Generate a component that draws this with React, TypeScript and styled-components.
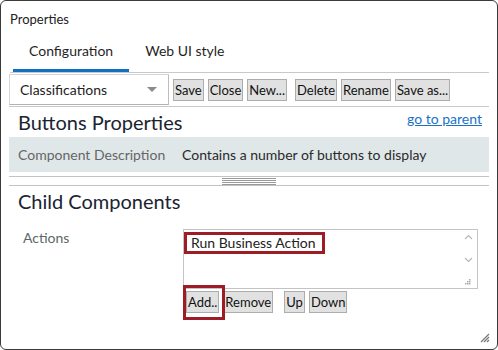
import styled, { createGlobalStyle } from "styled-components";

const GlobalStyle = createGlobalStyle`
  body {
    margin: 0;
    background: #fff;
    font-family: "Segoe UI", Lato, "Liberation Sans", sans-serif;
  }
`;

const Window = styled.div`
  position: relative;
  width: 498px;
  height: 350px;
  box-sizing: border-box;
  border: 1px solid #3a3a3a;
  border-radius: 6px;
  background: #fff;
  padding: 0 8px 0 7px;
  display: flex;
  flex-direction: column;
  color: #1f1f1f;
`;

const Title = styled.div`
  font-size: 13px;
  line-height: 16px;
  padding: 10px 0 0 2px;
  color: #222;
`;

const TabStrip = styled.div`
  display: flex;
  margin: 2px 0 0 2px;
  padding-left: 3px;
  border-bottom: 1px solid #c9c9c9;
`;

const Tab = styled.div<{ $active?: boolean }>`
  height: 43px;
  box-sizing: border-box;
  display: flex;
  align-items: center;
  padding: 2px 16px 0;
  font-size: 14px;
  color: #1f1f1f;
  border-bottom: 3px solid ${(p) => (p.$active ? "#1070c4" : "transparent")};
`;

const Toolbar = styled.div`
  display: flex;
  align-items: center;
  gap: 4px;
  height: 31px;
  margin: 1px 0 0 1px;
  padding-bottom: 1px;
  border-bottom: 1px solid #c9c9c9;
`;

const Select = styled.div`
  width: 160px;
  height: 31px;
  box-sizing: border-box;
  display: flex;
  align-items: center;
  justify-content: space-between;
  padding: 0 11px 0 10px;
  border: 1px solid #d6d6d6;
  border-right-color: #bdbdbd;
  border-bottom-color: #b3b3b3;
  font-size: 14px;
  color: #222;
`;

const Caret = styled.span`
  width: 0;
  height: 0;
  border-left: 5px solid transparent;
  border-right: 5px solid transparent;
  border-top: 5px solid #8a8a8a;
`;

const Btn = styled.button<{ $gap?: number }>`
  height: 22px;
  box-sizing: border-box;
  padding: 0 1px;
  margin-left: ${(p) => p.$gap ?? 0}px;
  background: #e1e1e1;
  border: 1px solid #adadad;
  border-radius: 0;
  font-family: inherit;
  font-size: 13px;
  color: #111;
  line-height: 18px;
`;

const HeaderRow = styled.div`
  display: flex;
  justify-content: space-between;
  align-items: flex-start;
  height: 30px;
  padding: 0 7px 0 10px;
`;

const Heading = styled.div`
  font-size: 20px;
  line-height: 28px;
  margin-top: 1px;
  color: #1a2430;
`;

const Link = styled.a`
  font-size: 14px;
  line-height: 18px;
  margin-top: 3px;
  color: #1a72c8;
  text-decoration: underline;
`;

const DescRow = styled.div`
  display: flex;
  align-items: center;
  height: 35px;
  margin-left: 1px;
  padding-left: 9px;
  background: #dfe7e9;
  font-size: 14px;
`;

const DescLabel = styled.span`
  width: 164px;
  color: #666;
`;

const DescValue = styled.span`
  color: #2a2a2a;
`;

const Splitter = styled.div`
  display: flex;
  justify-content: center;
  align-items: center;
  height: 8px;
  margin: 4px 0 0 1px;
  border-top: 1px solid #c3c3c3;
  border-bottom: 1px solid #c3c3c3;
`;

const Grip = styled.div`
  width: 54px;
  height: 7px;
  background: repeating-linear-gradient(
    to bottom,
    #9a9a9a 0 1px,
    transparent 1px 2px
  );
`;

const FormRow = styled.div`
  display: flex;
  margin-top: 13px;
`;

const FieldLabel = styled.div`
  width: 160px;
  padding-left: 15px;
  font-size: 14px;
  line-height: 18px;
  color: #5c6868;
`;

const FieldBody = styled.div`
  display: flex;
  flex-direction: column;
`;

const ListBox = styled.div`
  position: relative;
  width: 295px;
  height: 60px;
  box-sizing: border-box;
  border: 1px solid #c4c4c4;
  padding: 2px 0 0 0;
`;

const Marked = styled.span`
  display: inline-block;
  border: 3px solid #9d1c26;
  padding: 0 6px 0 4px;
  font-size: 14px;
  line-height: 16px;
  color: #222;
`;

const ScrollArrows = styled.div`
  position: absolute;
  right: 4px;
  top: 4px;
  bottom: 3px;
  width: 10px;
  display: flex;
  flex-direction: column;
  justify-content: space-between;
  align-items: center;
`;

const ButtonRow = styled.div`
  display: flex;
  align-items: center;
  gap: 4px;
  margin: 2px 0 0 3px;
`;

const Outline = styled.span`
  position: relative;
  display: inline-flex;
  &::after {
    content: "";
    position: absolute;
    left: -3px;
    right: -6px;
    top: -6px;
    bottom: -7px;
    border: 3px solid #9d1c26;
    pointer-events: none;
  }
`;

const ResizeGrip = styled.svg`
  position: absolute;
  right: 7px;
  bottom: 6px;
`;

function Chevron({ up }: { up?: boolean }) {
  return (
    <svg width="9" height="6" viewBox="0 0 9 6">
      <path
        d={up ? "M1 5 L4.5 1.5 L8 5" : "M1 1 L4.5 4.5 L8 1"}
        fill="none"
        stroke="#b8b8b8"
        strokeWidth="1.2"
      />
    </svg>
  );
}

export default function App() {
  return (
    <>
      <GlobalStyle />
      <Window>
        <Title>Properties</Title>
        <TabStrip>
          <Tab $active>Configuration</Tab>
          <Tab>Web UI style</Tab>
        </TabStrip>
        <Toolbar>
          <Select>
            Classifications
            <Caret />
          </Select>
          <Btn>Save</Btn>
          <Btn>Close</Btn>
          <Btn>New...</Btn>
          <Btn $gap={4}>Delete</Btn>
          <Btn>Rename</Btn>
          <Btn>Save as...</Btn>
        </Toolbar>
        <HeaderRow>
          <Heading>Buttons Properties</Heading>
          <Link href="#">go to parent</Link>
        </HeaderRow>
        <DescRow>
          <DescLabel>Component Description</DescLabel>
          <DescValue>Contains a number of buttons to display</DescValue>
        </DescRow>
        <Splitter>
          <Grip />
        </Splitter>
        <HeaderRow>
          <Heading>Child Components</Heading>
        </HeaderRow>
        <FormRow>
          <FieldLabel>Actions</FieldLabel>
          <FieldBody>
            <ListBox>
              <Marked>Run Business Action</Marked>
              <ScrollArrows>
                <Chevron up />
                <Chevron />
                <svg width="6" height="6" viewBox="0 0 6 6">
                  <rect x="4" y="0" width="1.5" height="1.5" fill="#aaa" />
                  <rect x="2" y="2" width="1.5" height="1.5" fill="#aaa" />
                  <rect x="4" y="2" width="1.5" height="1.5" fill="#aaa" />
                  <rect x="0" y="4" width="1.5" height="1.5" fill="#aaa" />
                  <rect x="2" y="4" width="1.5" height="1.5" fill="#aaa" />
                  <rect x="4" y="4" width="1.5" height="1.5" fill="#aaa" />
                </svg>
              </ScrollArrows>
            </ListBox>
            <ButtonRow>
              <Outline>
                <Btn>Add..</Btn>
              </Outline>
              <Btn>Remove</Btn>
              <Btn $gap={7}>Up</Btn>
              <Btn>Down</Btn>
            </ButtonRow>
          </FieldBody>
        </FormRow>
        <ResizeGrip width="12" height="12" viewBox="0 0 12 12">
          <path
            d="M11 3 L3 11 M11 6 L6 11 M11 9 L9 11"
            stroke="#777"
            strokeWidth="1.2"
          />
        </ResizeGrip>
      </Window>
    </>
  );
}
